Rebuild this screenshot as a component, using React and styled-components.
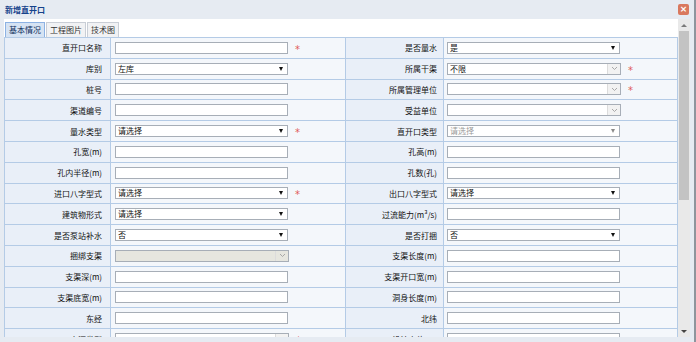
import styled, { createGlobalStyle } from "styled-components"

const GlobalStyle = createGlobalStyle`
  html, body { margin: 0; padding: 0; }
  body {
    width: 696px;
    height: 342px;
    overflow: hidden;
    background: #8e959e;
    font-family: "Noto Sans CJK SC", "Noto Sans", sans-serif;
    font-size: 8px;
    color: #111;
  }
`

const Dialog = styled.div`
  width: 694px;
  height: 342px;
  background: #e6ebf2;
  display: flex;
  flex-direction: column;
`

const TitleBar = styled.div`
  height: 19px;
  flex-shrink: 0;
  display: flex;
  align-items: center;
  justify-content: space-between;
  padding: 0 5px 0 5px;
`

const Title = styled.span`
  font-weight: bold;
  color: #15428b;
  font-size: 8px;
`

const CloseButton = styled.div`
  width: 11px;
  height: 11px;
  border-radius: 2px;
  background: #d9785e;
  color: #fff;
  font-size: 9px;
  line-height: 11px;
  text-align: center;
  font-family: "DejaVu Sans", sans-serif;
  font-weight: bold;
`

const Body = styled.div`
  height: 318px;
  margin: 0 4px;
  display: flex;
  overflow: hidden;
`

const ScrollArea = styled.div`
  flex: 1;
  overflow: hidden;
  background: #f3f6fb;
`

const TabStrip = styled.div`
  height: 18px;
  background: #fff;
  display: flex;
  align-items: flex-end;
  gap: 1px;
  padding-left: 1px;
`

const Tab = styled.div`
  height: 15px;
  box-sizing: border-box;
  padding: 0 3px;
  line-height: 14px;
  border: 1px solid ${p => (p.$active ? "#8db2e3" : "#c9ced6")};
  border-bottom: none;
  background: ${p => (p.$active ? "#d6e3f3" : "#f1f2f4")};
  color: ${p => (p.$active ? "#0d2c5a" : "#333")};
`

const FormGrid = styled.div`
  display: grid;
  grid-template-columns: 105px 234px 97px 233px;
  grid-auto-rows: 19.8px;
  gap: 1px;
  padding: 1px;
  background: #b4cbe6;
`

const LabelCell = styled.div`
  background: #e9eff8;
  display: flex;
  align-items: center;
  justify-content: flex-end;
  padding-right: ${p => (p.$right ? 6 : 8)}px;
  white-space: nowrap;
`

const FieldCell = styled.div`
  background: #f4f7fb;
  display: flex;
  align-items: center;
  padding-left: ${p => (p.$right ? 3 : 4)}px;
`

const TextInput = styled.input`
  width: 173px;
  height: 12px;
  box-sizing: border-box;
  border: 1px solid #a7aeb7;
  background: #fff;
  padding: 0 2px;
  margin: 0;
  font: inherit;
  outline: none;
`

const Select = styled.div`
  width: 173px;
  height: 12px;
  box-sizing: border-box;
  border: 1px solid #a7aeb7;
  background: #fff;
  padding: 0 4px 0 2px;
  display: flex;
  align-items: center;
  justify-content: space-between;
  color: ${p => (p.$disabled ? "#9a9a9a" : "#111")};
  line-height: 10px;
`

const SelectArrow = styled.span`
  width: 0;
  height: 0;
  border-left: 2.5px solid transparent;
  border-right: 2.5px solid transparent;
  border-top: 4px solid ${p => (p.$disabled ? "#8a8a8a" : "#111")};
`

const Combo = styled.div`
  width: 174px;
  height: 12px;
  box-sizing: border-box;
  border: 1px solid #a7aeb7;
  background: ${p => (p.$disabled ? "#e6e6df" : "#fff")};
  display: flex;
  align-items: stretch;
  line-height: 10px;
`

const ComboText = styled.span`
  flex: 1;
  padding-left: 2px;
`

const ComboButton = styled.span`
  width: 12px;
  display: flex;
  align-items: center;
  justify-content: center;
  background: ${p => (p.$disabled ? "#e6e6df" : "#f2f2f2")};
  border-left: 1px solid #dcdcdc;
`

const Required = styled.span`
  color: #e05a5a;
  font-size: 10px;
  font-family: "DejaVu Sans", sans-serif;
  margin-left: 7px;
  margin-top: 3px;
`

const ScrollBar = styled.div`
  width: 12px;
  flex-shrink: 0;
  background: #e9e9e9;
  display: flex;
  flex-direction: column;
  padding-top: 1px;
  box-sizing: border-box;
`

const ScrollButton = styled.div`
  height: 11px;
  display: flex;
  align-items: center;
  justify-content: center;
`

const Tri = styled.span`
  width: 0;
  height: 0;
  border-left: 3px solid transparent;
  border-right: 3px solid transparent;
  ${p => (p.$up ? "border-bottom: 3px solid #7a7a7a;" : "border-top: 3px solid #444;")}
`

const Thumb = styled.div`
  height: 169px;
  margin: 0 1px;
  background: #c3c3c3;
`

const Track = styled.div`
  flex: 1;
`

const Chevron = () => (
  <svg width="7" height="5" viewBox="0 0 7 5">
    <path d="M1 1 L3.5 3.5 L6 1" fill="none" stroke="#a0a0a0" strokeWidth="0.9" />
  </svg>
)

const rows = [
  [{ label: "直开口名称", type: "text", req: true }, { label: "是否量水", type: "select", value: "是" }],
  [{ label: "库别", type: "select", value: "左库" }, { label: "所属干渠", type: "combo", value: "不限", req: true }],
  [{ label: "桩号", type: "text" }, { label: "所属管理单位", type: "combo", req: true }],
  [{ label: "渠道编号", type: "text" }, { label: "受益单位", type: "combo" }],
  [{ label: "量水类型", type: "select", value: "请选择", req: true }, { label: "直开口类型", type: "select", value: "请选择", disabled: true }],
  [{ label: "孔宽(m)", type: "text" }, { label: "孔高(m)", type: "text" }],
  [{ label: "孔内半径(m)", type: "text" }, { label: "孔数(孔)", type: "text" }],
  [{ label: "进口八字型式", type: "select", value: "请选择", req: true }, { label: "出口八字型式", type: "select", value: "请选择" }],
  [{ label: "建筑物形式", type: "select", value: "请选择" }, { label: "过流能力(m³/s)", type: "text" }],
  [{ label: "是否泵站补水", type: "select", value: "否" }, { label: "是否打捆", type: "select", value: "否" }],
  [{ label: "捆绑支渠", type: "combo", disabled: true }, { label: "支渠长度(m)", type: "text" }],
  [{ label: "支渠深(m)", type: "text" }, { label: "支渠开口宽(m)", type: "text" }],
  [{ label: "支渠底宽(m)", type: "text" }, { label: "洞身长度(m)", type: "text" }],
  [{ label: "东经", type: "text" }, { label: "北纬", type: "text" }],
  [{ label: "水源类型", type: "combo", req: true }, { label: "设计水位(m)", type: "text" }],
]

const Field = ({ f }) => {
  if (f.type === "select") {
    return (
      <Select $disabled={f.disabled}>
        <span>{f.value}</span>
        <SelectArrow $disabled={f.disabled} />
      </Select>
    )
  }
  if (f.type === "combo") {
    return (
      <Combo $disabled={f.disabled}>
        <ComboText>{f.value}</ComboText>
        <ComboButton $disabled={f.disabled}><Chevron /></ComboButton>
      </Combo>
    )
  }
  return <TextInput type="text" defaultValue="" />
}

const App = () => {
  return (
    <>
      <GlobalStyle />
      <Dialog>
        <TitleBar>
          <Title>新增直开口</Title>
          <CloseButton>×</CloseButton>
        </TitleBar>
        <Body>
          <ScrollArea>
            <TabStrip>
              <Tab $active>基本情况</Tab>
              <Tab>工程图片</Tab>
              <Tab>技术图</Tab>
            </TabStrip>
            <FormGrid>
              {rows.map((row, i) =>
                row.map((f, j) => [
                  <LabelCell key={`l${i}${j}`} $right={j === 1}>{f.label}</LabelCell>,
                  <FieldCell key={`f${i}${j}`} $right={j === 1}>
                    <Field f={f} />
                    {f.req ? <Required>*</Required> : null}
                  </FieldCell>,
                ])
              )}
            </FormGrid>
          </ScrollArea>
          <ScrollBar>
            <ScrollButton><Tri $up /></ScrollButton>
            <Thumb />
            <Track />
            <ScrollButton><Tri /></ScrollButton>
          </ScrollBar>
        </Body>
      </Dialog>
    </>
  )
}

export default App
